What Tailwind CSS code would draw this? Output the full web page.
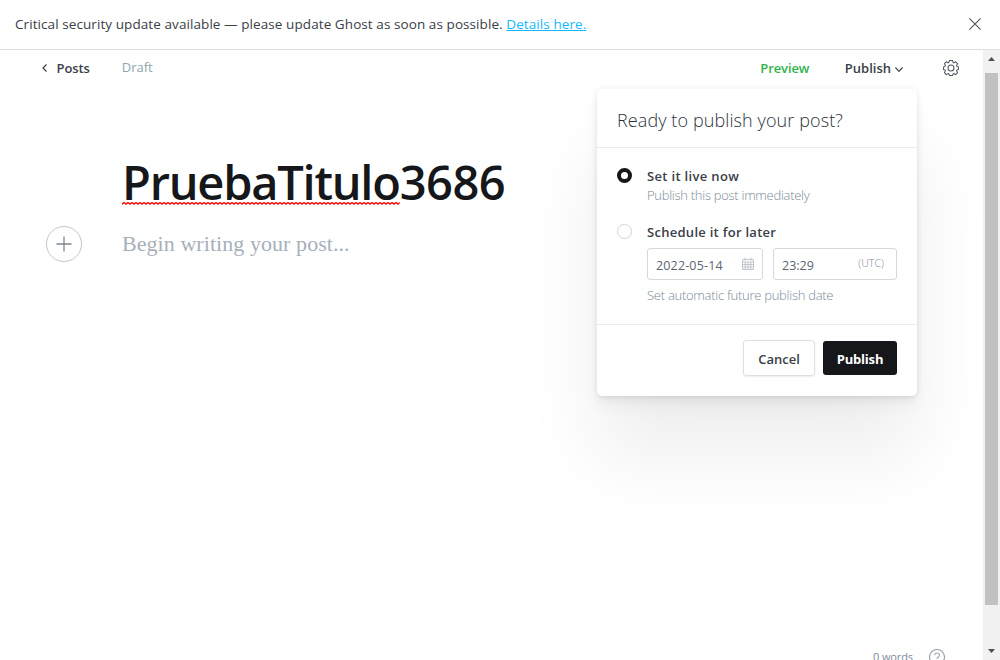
<!DOCTYPE html>
<html lang="en">
<head>
<meta charset="utf-8">
<title>Post editor</title>
<script src="https://cdn.jsdelivr.net/npm/@tailwindcss/browser@4"></script>
</head>
<body class="bg-white">
<div class="w-[1000px] h-[660px] overflow-hidden flex flex-col font-['Open_Sans',sans-serif] text-[13px] text-[#394047] whitespace-nowrap">
  <div class="h-[50px] shrink-0 border-b border-[#dedfe0] flex items-center justify-between pl-[15px] pr-[19px]">
    <p class="leading-5 pb-[2px] text-[13.5px] tracking-[0.08px]"><span>Critical security update available — please update Ghost as soon as possible.</span> <a class="text-[#14b8ff] underline">Details here.</a></p>
    <svg class="w-3 h-3 mb-px" viewBox="0 0 12 12" fill="none" stroke="#50585f" stroke-width="1.1"><path d="M.4.4l11.2 11.2M11.6.4L.4 11.6"/></svg>
  </div>
  <div class="flex flex-1 min-h-0">
    <div class="relative flex flex-col w-[983px]">
      <header class="flex items-center h-9 pl-[42px] pr-6">
        <svg class="w-[5px] h-[8px]" viewBox="0 0 5 8" fill="none" stroke="#394047" stroke-width="1.2"><path d="M4.500.5L1 4l3.500 3.500"/></svg>
        <span class="ml-[9.500px] pt-[2px] font-semibold tracking-[-0.1px]">Posts</span>
        <span class="ml-8 text-[#8fa3ad]">Draft</span>
        <span class="ml-auto pt-[2px] font-semibold text-[#30b24a] tracking-[-0.1px]">Preview</span>
        <span class="ml-[35.500px] pt-[2px] font-semibold">Publish</span>
        <svg class="ml-1 mr-px mt-[3px] w-[8px] h-[5px]" viewBox="0 0 8 5" fill="none" stroke="#394047" stroke-width="1.2"><path d="M.4.5L4 4.300 7.600.5"/></svg>
        <svg class="ml-[39px] w-4 h-4" viewBox="0 0 16 16" fill="none" stroke="#50585f" stroke-width="1.05" stroke-linejoin="round"><path d="M6.500.5h3L10 2.200a.8.8 0 0 0 1.100.5l1.600-.9 1.900 1.900-.9 1.600a.8.8 0 0 0 .4 1.100l1.500.5v2.600l-1.500.5a.8.8 0 0 0-.4 1.100l.9 1.600-1.900 1.900-1.600-.9a.8.8 0 0 0-1.100.5L9.500 15.500h-3L6 14.200a.8.8 0 0 0-1.100-.5l-1.600.9-1.900-1.900.9-1.600a.8.8 0 0 0-.4-1.100L.5 9.500V6.900l1.400-.5a.8.8 0 0 0 .4-1.100l-.9-1.600 1.900-1.900 1.600.9A.8.8 0 0 0 6 2.200z"/><circle cx="8" cy="8" r="3"/></svg>
      </header>
      <main class="flex-1 pt-[64px]">
        <h1 class="ml-[122px] h-[66px] leading-[64px] text-[47px] font-semibold text-[#15171a]"><span class="relative tracking-[-1.240px]">PruebaTitulo<svg class="absolute left-0 bottom-[9px] w-full h-[3px]"><defs><pattern id="squiggle" width="4" height="3" patternUnits="userSpaceOnUse"><path d="M-1 3L2 .5l3 2.500" fill="none" stroke="#f00" stroke-width="1.300"/></pattern></defs><rect width="100%" height="3" fill="url(#squiggle)"/></svg></span><span class="tracking-[-0.500px]">3686</span></h1>
        <div class="flex items-center mt-[10px] ml-[46px]">
          <span class="flex items-center justify-center w-9 h-9 rounded-full border border-[#c1c8ce]"><svg class="w-4 h-4" viewBox="0 0 16 16" fill="none" stroke="#7c858e" stroke-width="1.300"><path d="M8 .5v15M.5 8h15"/></svg></span>
          <span class="ml-10 pb-px font-['Liberation_Serif',serif] text-[22px] tracking-[0.060px] text-[#a6b0bb]">Begin writing your post...</span>
        </div>
      </main>
      <footer class="flex justify-end items-start gap-4 h-[14px] pr-[38px] text-[11px] text-[#7c8b9a]">
        <span class="leading-[22px] tracking-[-0.1px]">0 words</span>
        <svg class="mt-[3px] w-4 h-4 shrink-0" viewBox="0 0 16 16" fill="none" stroke="#98a1ab" stroke-width="1.100"><circle cx="8" cy="8" r="7.500"/><path d="M5.700 6.300a2.300 2.300 0 1 1 3.400 2c-.8.4-1.100.8-1.100 1.700M8 11.500v1"/></svg>
      </footer>

      <section class="absolute left-[597px] top-[39px] w-[320px] h-[307px] rounded-[5px] bg-white flex flex-col shadow-[0_0_7px_rgba(0,0,0,0.08),0_2.100px_2.700px_-0.200px_rgba(0,0,0,0.022),0_5.500px_7.200px_-0.300px_rgba(0,0,0,0.028),0_12px_16px_-0.500px_rgba(0,0,0,0.03),0_60px_80px_-1px_rgba(0,0,0,0.07)]">
        <h2 class="h-[59px] pl-5 pt-[2px] border-b border-[#e9ebed] leading-[58px] text-[18px] font-light tracking-[0.1px] text-[#2c3339]">Ready to publish your post?</h2>
        <div class="h-[177px] px-5 pt-[18px] border-b border-[#e9ebed] flex flex-col">
          <div class="flex gap-[15px]">
            <span class="mt-[2px] w-[15px] h-[15px] rounded-full border-4 border-[#15171a]"></span>
            <div><p class="leading-5 font-semibold tracking-[0.33px]">Set it live now</p><p class="leading-[18px] font-light tracking-[-0.28px] text-[#7a8a97]">Publish this post immediately</p></div>
          </div>
          <div class="flex gap-[15px] mt-[18px]">
            <span class="mt-[2px] w-[15px] h-[15px] shrink-0 rounded-full border border-[#cdd5dc]"></span>
            <div>
              <p class="leading-5 font-semibold tracking-[0.28px]">Schedule it for later</p>
              <div class="flex gap-[10px] mt-[6px] text-[12.5px] text-[#5a6570]">
                <div class="flex items-center justify-between w-[116px] h-8 pl-2 pr-2 rounded-[3px] border border-[#d5d9dd]"><span class="pt-[4px] tracking-[0.15px]">2022-05-14</span>
                  <svg class="w-3 h-[13px] mb-px" viewBox="0 0 12 13" fill="none" stroke="#b4bbc2" stroke-width=".8"><path d="M.5 2.500h11v10H.5zM.5 5h11M.5 7.500h11M.5 10h11M3.200 5v7.500M6 5v7.500M8.800 5v7.500M3 .5v3M9 .5v3"/></svg></div>
                <div class="flex items-center justify-between w-[124px] h-8 pl-2 pr-3 rounded-[3px] border border-[#d5d9dd]"><span class="pt-[4px]">23:29</span><span class="text-[10.5px] font-light tracking-[0.1px] text-[#7a8a97]">(UTC)</span></div>
              </div>
              <p class="mt-[5px] leading-5 font-light tracking-[-0.27px] text-[#7a8a97]">Set automatic future publish date</p>
            </div>
          </div>
        </div>
        <div class="flex justify-end items-center gap-2 pr-5 pt-[15px] font-semibold">
          <button class="w-[72px] h-[36px] pt-[3px] rounded-[3px] border border-[#dde1e5] shadow-[0_1px_2px_rgba(0,0,0,0.08)]">Cancel</button>
          <button class="w-[74px] h-[34px] pt-[3px] rounded-[3px] bg-[#15171a] text-white font-bold tracking-[-0.2px]">Publish</button>
        </div>
      </section>
    </div>
    <div class="w-[17px] bg-[#f1f1f1] flex flex-col items-center">
      <svg class="mt-[7px] w-[7px] h-[4px] shrink-0" viewBox="0 0 7 4" fill="#505050"><path d="M0 4L3.500 0 7 4z"/></svg>
      <div class="mt-3 w-[13px] h-[532px] shrink-0 bg-[#c1c1c1]"></div>
      <svg class="mt-[44px] w-[7px] h-[4px] shrink-0" viewBox="0 0 7 4" fill="#505050"><path d="M0 0h7L3.500 4z"/></svg>
    </div>
  </div>
</div>
</body>
</html>
